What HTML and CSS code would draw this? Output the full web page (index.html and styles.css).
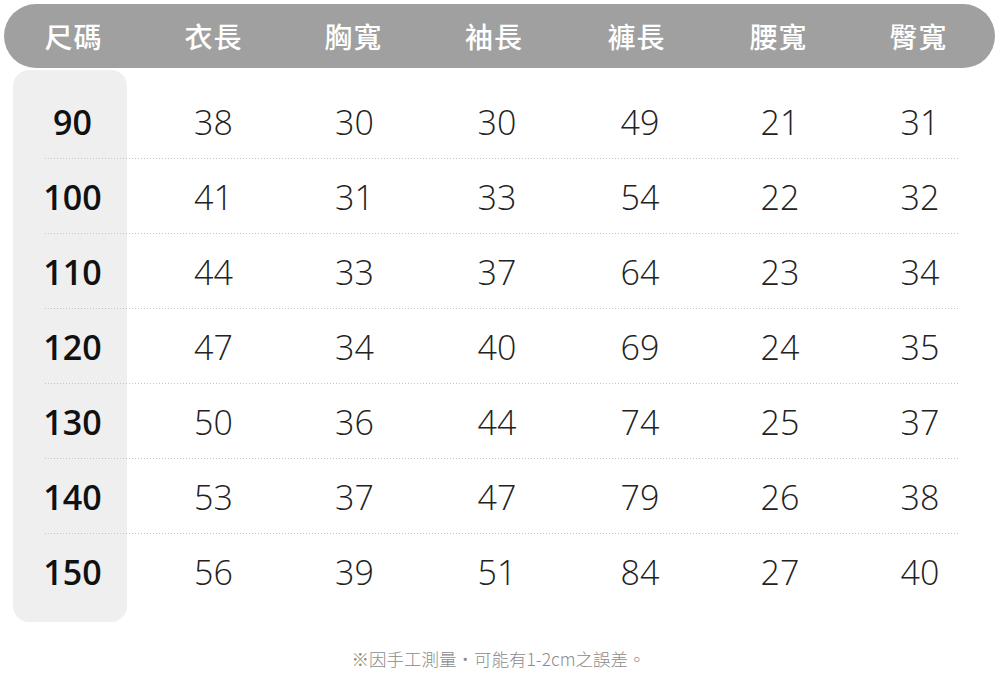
FILE: index.html
```html
<!DOCTYPE html>
<html lang="zh-Hant">
<head>
<meta charset="utf-8">
<title>尺寸表</title>
<link rel="stylesheet" href="styles.css">
</head>
<body>
<div class="sheet">
  <div class="head">
    <div>尺碼</div><div>衣長</div><div>胸寬</div><div>袖長</div><div>褲長</div><div>腰寬</div><div>臀寬</div>
  </div>
  <div class="body">
    <div class="sizebg"></div>
    <div class="rows">
      <div class="row"><div class="size">90</div><div>38</div><div>30</div><div>30</div><div>49</div><div>21</div><div>31</div></div>
      <div class="row"><div class="size">100</div><div>41</div><div>31</div><div>33</div><div>54</div><div>22</div><div>32</div></div>
      <div class="row"><div class="size">110</div><div>44</div><div>33</div><div>37</div><div>64</div><div>23</div><div>34</div></div>
      <div class="row"><div class="size">120</div><div>47</div><div>34</div><div>40</div><div>69</div><div>24</div><div>35</div></div>
      <div class="row"><div class="size">130</div><div>50</div><div>36</div><div>44</div><div>74</div><div>25</div><div>37</div></div>
      <div class="row"><div class="size">140</div><div>53</div><div>37</div><div>47</div><div>79</div><div>26</div><div>38</div></div>
      <div class="row last"><div class="size">150</div><div>56</div><div>39</div><div>51</div><div>84</div><div>27</div><div>40</div></div>
    </div>
  </div>
  <p class="note">※因手工測量・可能有1-2cm之誤差。</p>
</div>
</body>
</html>
```
FILE: styles.css
```css
html, body {
  margin: 0;
  padding: 0;
  background: #ffffff;
}

.sheet {
  width: 995px;
  height: 680px;
  padding-left: 2px;
  box-sizing: border-box;
  overflow: hidden;
}

.head {
  margin: 4px 0 0 2px;
  width: 991px;
  height: 64px;
  border-radius: 32px;
  background: #a0a0a0;
  display: grid;
  grid-template-columns: 139px 141px 139px 142px 143px 141px 139px;
  align-items: center;
  color: #ffffff;
  font-family: "Noto Sans CJK TC", "Noto Sans", sans-serif;
  font-weight: 500;
  font-size: 28px;
  line-height: 64px;
  letter-spacing: 1px;
  text-align: center;
}

.body {
  margin-top: 2px;
  display: grid;
}

.sizebg {
  grid-area: 1 / 1;
  margin-left: 11px;
  width: 114px;
  background: #efefef;
  border-radius: 16px;
}

.rows {
  grid-area: 1 / 1;
  padding: 14px 0 13px;
}

.row {
  height: 75px;
  display: grid;
  grid-template-columns: 141px 141px 141px 144px 142px 138px 142px;
  align-items: center;
  text-align: center;
  font-family: "Open Sans", "Liberation Sans", sans-serif;
  font-weight: 300;
  font-size: 34px;
  line-height: 74px;
  color: #222222;
  background-image: repeating-linear-gradient(to right, #c4c4c4 0 1px, transparent 1px 3px);
  background-repeat: no-repeat;
  background-size: 913px 1px;
  background-position: 43px 100%;
}

.row.last {
  background-image: none;
}

.row .size {
  font-weight: 560;
  color: #111111;
}

.note {
  margin: 25px 0 0;
  text-align: center;
  font-family: "Noto Sans CJK TC", "Noto Sans", sans-serif;
  font-weight: 300;
  font-size: 17.5px;
  line-height: 24px;
  color: #8c8c8c;
}
```
